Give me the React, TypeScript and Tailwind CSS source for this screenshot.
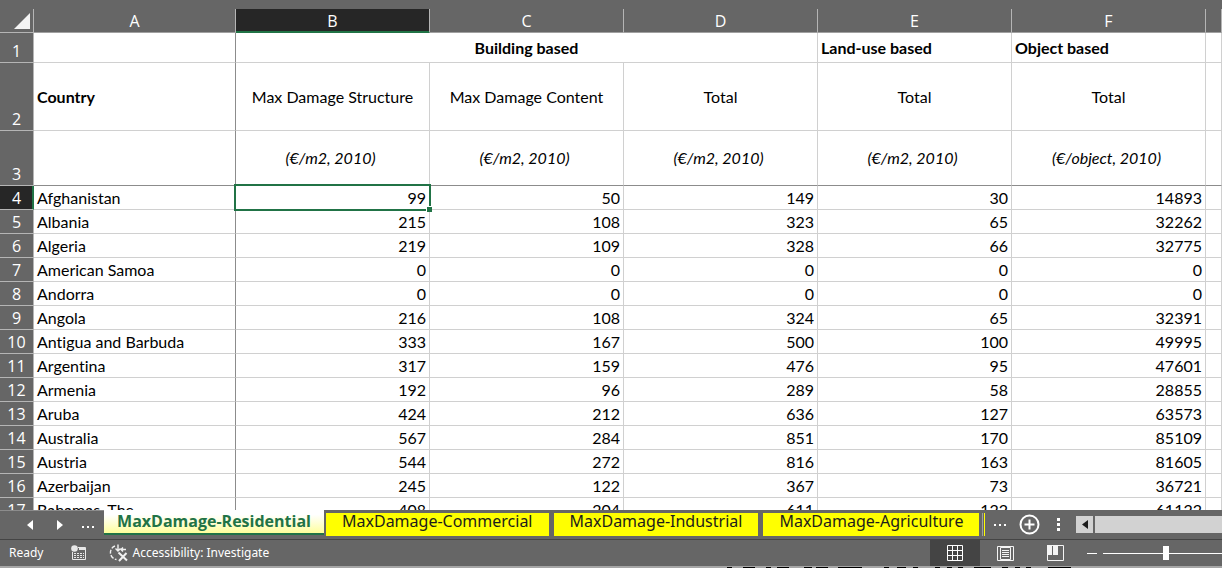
import React from "react";

const ROWS: [string, number, number, number, number, number][] = [
  ["Afghanistan", 99, 50, 149, 30, 14893],
  ["Albania", 215, 108, 323, 65, 32262],
  ["Algeria", 219, 109, 328, 66, 32775],
  ["American Samoa", 0, 0, 0, 0, 0],
  ["Andorra", 0, 0, 0, 0, 0],
  ["Angola", 216, 108, 324, 65, 32391],
  ["Antigua and Barbuda", 333, 167, 500, 100, 49995],
  ["Argentina", 317, 159, 476, 95, 47601],
  ["Armenia", 192, 96, 289, 58, 28855],
  ["Aruba", 424, 212, 636, 127, 63573],
  ["Australia", 567, 284, 851, 170, 85109],
  ["Austria", 544, 272, 816, 163, 81605],
  ["Azerbaijan", 245, 122, 367, 73, 36721],
  ["Bahamas, The", 408, 204, 611, 122, 61122],
];

const CELL = "border-r border-b border-[#d0d0d0]";
const FROZEN = "border-r border-b border-r-[#8c8c8c] border-b-[#d0d0d0]";
const ROW_HEAD =
  "border-r border-b border-[#b5b5b5] bg-[#666666] p-0 text-center font-['Open_Sans',sans-serif] text-base leading-[22px] font-normal text-white";

function ColumnHead({ label, active = false }: { label: string; active?: boolean }) {
  return (
    <th
      scope="col"
      className={
        active
          ? "border-r border-b border-r-[#b5b5b5] border-b-[#217346] bg-[#262626] p-0 font-normal shadow-[inset_0_-1px_0_#217346]"
          : "border-r border-b border-r-[#b5b5b5] border-b-[#a0a0a0] p-0 font-normal"
      }
    >
      {label}
    </th>
  );
}

function SheetTab({ label }: { label: string }) {
  return (
    <button className="flex h-[23px] shrink-0 items-start bg-[#ffff00] px-4 font-['Noto_Sans',sans-serif] text-base leading-4 text-[#1c1c1c]">
      {label}
    </button>
  );
}

export default function App() {
  return (
    <div className="flex h-screen flex-col overflow-hidden bg-[#666666] font-['Open_Sans',sans-serif]">
      <main className="min-h-0 flex-1 overflow-hidden pt-[9px]">
        <table className="w-full table-fixed border-separate border-spacing-0 bg-white font-['Lato','Liberation_Sans',sans-serif] text-base leading-[22px] text-black [font-variant-ligatures:none]">
          <colgroup>
            <col className="w-[34px]" />
            <col className="w-[202px]" />
            <col className="w-[194px]" />
            <col className="w-[194px]" />
            <col className="w-[194px]" />
            <col className="w-[194px]" />
            <col className="w-[194px]" />
            <col />
          </colgroup>
          <thead>
            <tr className="h-6 bg-[#666666] font-['Open_Sans',sans-serif] text-base leading-[22px] text-white">
              <th className="border-r border-b border-[#b5b5b5] p-0">
                <svg className="ml-[14px] block" width="16" height="16" viewBox="0 0 16 16" aria-label="Select all">
                  <path d="M16 0V16H0Z" fill="#f4f4f4" />
                </svg>
              </th>
              <ColumnHead label="A" />
              <ColumnHead label="B" active />
              <ColumnHead label="C" />
              <ColumnHead label="D" />
              <ColumnHead label="E" />
              <ColumnHead label="F" />
              <ColumnHead label="" />
            </tr>
          </thead>
          <tbody>
            <tr className="h-[30px] font-bold">
              <th scope="row" className={`${ROW_HEAD} align-bottom`}>1</th>
              <td className={`${FROZEN} p-0`} />
              <td colSpan={3} className={`${CELL} p-0 text-center`}>Building based</td>
              <td className={`${CELL} px-[3px] py-0`}>Land-use based</td>
              <td className={`${CELL} px-[3px] py-0`}>Object based</td>
              <td className={`${CELL} p-0`} />
            </tr>
            <tr className="h-[68px] text-center">
              <th scope="row" className={`${ROW_HEAD} align-bottom`}>2</th>
              <td className={`${FROZEN} px-[3px] py-0 text-left font-bold`}>Country</td>
              <td className={`${CELL} p-0`}>Max Damage Structure</td>
              <td className={`${CELL} p-0`}>Max Damage Content</td>
              <td className={`${CELL} p-0`}>Total</td>
              <td className={`${CELL} p-0`}>Total</td>
              <td className={`${CELL} p-0`}>Total</td>
              <td className={`${CELL} p-0`} />
            </tr>
            <tr className="h-[55px] text-center italic">
              <th scope="row" className={`${ROW_HEAD} align-bottom not-italic`}>3</th>
              <td className="border-r border-b border-[#8c8c8c] p-0" />
              {["m2", "m2", "m2", "m2", "object"].map((unit, i) => (
                <td key={i} className="border-r border-b border-r-[#d0d0d0] border-b-[#8c8c8c] p-0 pr-1">
                  {`(€/${unit}, 2010)`}
                </td>
              ))}
              <td className="border-r border-b border-r-[#d0d0d0] border-b-[#8c8c8c] p-0" />
            </tr>
            {ROWS.map(([country, ...values], r) => (
              <tr key={country} className="h-6">
                <th
                  scope="row"
                  className={
                    r === 0
                      ? "border-r border-b border-r-[#217346] border-b-[#b5b5b5] bg-[#262626] p-0 text-center font-['Open_Sans',sans-serif] leading-[22px] font-normal text-white shadow-[inset_-1px_0_0_#217346]"
                      : ROW_HEAD
                  }
                >
                  {r + 4}
                </th>
                <td className={`${FROZEN} px-[3px] py-0 whitespace-nowrap`}>{country}</td>
                {values.map((value, c) => (
                  <td key={c} className={`${CELL} relative px-[3px] py-0 text-right`}>
                    {value}
                    {r === 0 && c === 0 && (
                      <span className="absolute -inset-x-0.5 -top-0.5 -bottom-0.5 z-10 border-2 border-[#217346]">
                        <span className="absolute -right-[3px] -bottom-[3px] bg-white pt-px pl-px">
                          <span className="block size-[5px] bg-[#217346]" />
                        </span>
                      </span>
                    )}
                  </td>
                ))}
                <td className={`${CELL} p-0`} />
              </tr>
            ))}
          </tbody>
        </table>
      </main>

      <nav aria-label="Sheets" className="flex h-[29px] shrink-0 items-start overflow-hidden bg-[#666666]">
        <div className="flex h-full w-[104px] shrink-0 items-center border-t border-[#8c8c8c] pl-[27px] text-white">
          <button aria-label="Previous sheet">
            <svg className="block" width="7" height="10" viewBox="0 0 7 10"><path d="M6 0V10L0 5Z" fill="currentColor" /></svg>
          </button>
          <button aria-label="Next sheet" className="ml-[22px]">
            <svg className="block" width="7" height="10" viewBox="0 0 7 10"><path d="M1 0V10L7 5Z" fill="currentColor" /></svg>
          </button>
          <button aria-label="More sheets to the left" className="ml-[19px]">
            <svg className="block" width="13" height="8" viewBox="0 0 13 8"><path d="M0 5h2v2H0zM5 5h2v2H5zM10 5h2v2h-2z" fill="currentColor" /></svg>
          </button>
        </div>
        <button className="flex h-[25px] w-[220px] shrink-0 items-start justify-center border-b-2 border-[#217346] bg-linear-to-b from-white from-20% to-[#ffff99] text-base leading-[22px] font-bold text-[#217346]">
          MaxDamage-Residential
        </button>
        <div className="flex shrink-0 gap-[5px] pt-[3px] pl-[2px]">
          <SheetTab label="MaxDamage-Commercial" />
          <SheetTab label="MaxDamage-Industrial" />
          <SheetTab label="MaxDamage-Agriculture" />
        </div>
        <div className="mt-[3px] ml-[3px] h-[23px] w-[3px] shrink-0 border-x border-l-[#a0a0a0] border-r-[#ffff00]" />
        <div className="ml-auto flex h-full w-[235px] shrink-0 items-center text-white">
          <button aria-label="More sheets" className="ml-[7px]">
            <svg className="block" width="13" height="4" viewBox="0 0 13 4"><path d="M0 1h2v2H0zM5 1h2v2H5zM10 1h2v2h-2z" fill="currentColor" /></svg>
          </button>
          <button aria-label="New sheet" className="ml-3">
            <svg className="block" width="21" height="21" viewBox="0 0 21 21" fill="none" stroke="currentColor" strokeWidth="2">
              <circle cx="10.500" cy="10.500" r="9" />
              <path d="M5.500 10.500h10M10.500 5.500v10" />
            </svg>
          </button>
          <svg className="ml-[17px] block shrink-0" width="3" height="13" viewBox="0 0 3 13" aria-hidden="true">
            <path d="M0 0h3v3H0zM0 5h3v3H0zM0 10h3v3H0z" fill="currentColor" />
          </svg>
          <button aria-label="Scroll left" className="ml-4 flex h-[17px] w-[17px] shrink-0 items-center justify-center bg-[#d2d2d2] text-[#1c1c1c]">
            <svg className="block" width="6" height="9" viewBox="0 0 6 9"><path d="M6 0V9L0 4.500Z" fill="currentColor" /></svg>
          </button>
          <div className="ml-[2px] h-[17px] flex-1 bg-[#d2d2d2]" />
        </div>
      </nav>

      <footer className="flex h-[27px] shrink-0 items-center overflow-hidden border-t border-[#444444] font-['Noto_Sans',sans-serif] text-xs text-white">
        <span className="pl-[9px]">Ready</span>
        <button aria-label="Record macro" className="ml-7">
          <svg className="block" width="16" height="16" viewBox="0 0 16 16">
            <path d="M7 2.500H14.500V14.500H1.500V7" fill="none" stroke="#e8e8e8" />
            <path d="M8 3h6v2H8z" fill="#e8e8e8" />
            <path d="M3 8.500h10M3 10.500h10M3 12.500h10" stroke="#e8e8e8" strokeDasharray="2 1" />
            <circle cx="3.500" cy="3.500" r="3.300" fill="#e8e8e8" />
          </svg>
        </button>
        <button className="ml-[22px] flex items-center">
          <svg className="mr-[3px] block" width="20" height="18" viewBox="0 0 20 18" fill="none" stroke="#f0f0f0" aria-hidden="true">
            <path d="M6 2A7 7 0 0 0 7.500 15.500" strokeWidth="1.400" strokeDasharray="4 1.500" />
            <path d="M9 0.500V7M6.500 4.500L9 7L11.500 4.500M17 5.500H12M14 3.500L12 5.500L14 7.500" strokeWidth="1.400" />
            <path d="M9.500 8.500L18 16.500M17.500 9L10 17" strokeWidth="2" />
          </svg>
          Accessibility: Investigate
        </button>
        <div className="ml-auto flex h-full shrink-0 items-center">
          <button aria-label="Normal view" className="flex h-full w-[50px] items-center justify-center bg-[#444444]">
            <svg className="block" width="16" height="16" viewBox="0 0 16 16" fill="none" stroke="#ffffff">
              <path d="M0.500 0.500h15v15h-15zM5.500 0v16M10.500 0v16M0 5.500h16M0 10.500h16" />
            </svg>
          </button>
          <button aria-label="Page layout view" className="flex h-full w-[50px] items-center justify-center">
            <svg className="block" width="17" height="15" viewBox="0 0 17 15" fill="none" stroke="#f4f4f4">
              <path d="M0.500 0.500h16v14h-16zM3.500 1.500h10v12h-10zM5 4.500h7M5 6.500h7M5 8.500h7M5 10.500h7" />
            </svg>
          </button>
          <button aria-label="Page break preview" className="flex h-full w-[50px] items-center justify-center">
            <svg className="block" width="17" height="16" viewBox="0 0 17 16">
              <path d="M0.500 0.500h16v15h-16z" fill="none" stroke="#f4f4f4" />
              <path d="M0 0h5v10H0zM6 0h5v10H6z" fill="#f4f4f4" />
            </svg>
          </button>
          <button aria-label="Zoom out" className="flex h-full w-[23px] items-center justify-center">
            <span className="block h-px w-[10px] bg-white" />
          </button>
          <input
            type="range"
            aria-label="Zoom"
            defaultValue={50}
            className="-mr-[7px] h-[15px] w-[126px] appearance-none bg-[linear-gradient(#ffffff,#ffffff)] bg-[length:100%_1px] bg-center bg-no-repeat [&::-webkit-slider-thumb]:h-[14px] [&::-webkit-slider-thumb]:w-[6px] [&::-webkit-slider-thumb]:appearance-none [&::-webkit-slider-thumb]:bg-white"
          />
        </div>
      </footer>

      <div className="h-0.5 shrink-0 overflow-hidden bg-[#a6a6a6]">
        <svg className="block" width="1222" height="2" viewBox="0 0 1222 2" aria-hidden="true">
          <path
            d="M727 1.500h5M743 1.500h12M766 1.500h5M777 1.500h12M804 1.500h8M816 1.500h12M838 1.500h24M884 1.500h5M897 1.500h9M913 1.500h5M935 1.500h5M947 1.500h5M958 1.500h5M974 1.500h17M1002 1.500h6M1015 1.500h5M1026 1.500h5M1048 1.500h23"
            stroke="#000000"
          />
        </svg>
      </div>
    </div>
  );
}
